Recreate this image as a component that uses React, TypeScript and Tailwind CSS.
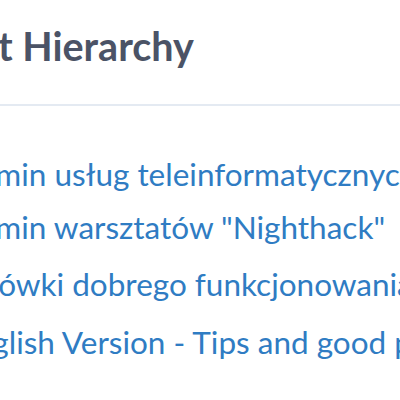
export default function App() {
  return (
    <div className="w-[400px] h-[400px] overflow-hidden bg-white" style={{ fontFamily: "Lato, 'Noto Sans', sans-serif" }}>
      <div className="h-[106px] border-b-2 border-[#e4eaf2] whitespace-nowrap">
        <div className="pt-[22px] ml-[-130px] text-[39.5px] font-bold leading-[48px] text-[#4b5366]">Content Hierarchy</div>
      </div>
      <div className="whitespace-nowrap text-[31.5px] leading-[37px] text-[#2f7cc3]">
        <div className="mt-[50px] ml-[-97px]">Regulamin usług teleinformatycznych</div>
        <div className="mt-[16px] ml-[-97px]">Regulamin warsztatów "Nighthack"</div>
        <div className="mt-[20px] ml-[-92px]">Wskazówki dobrego funkcjonowania</div>
        <div className="mt-[21px] ml-[-43px]">English Version - Tips and good practices</div>
      </div>
    </div>
  );
}
